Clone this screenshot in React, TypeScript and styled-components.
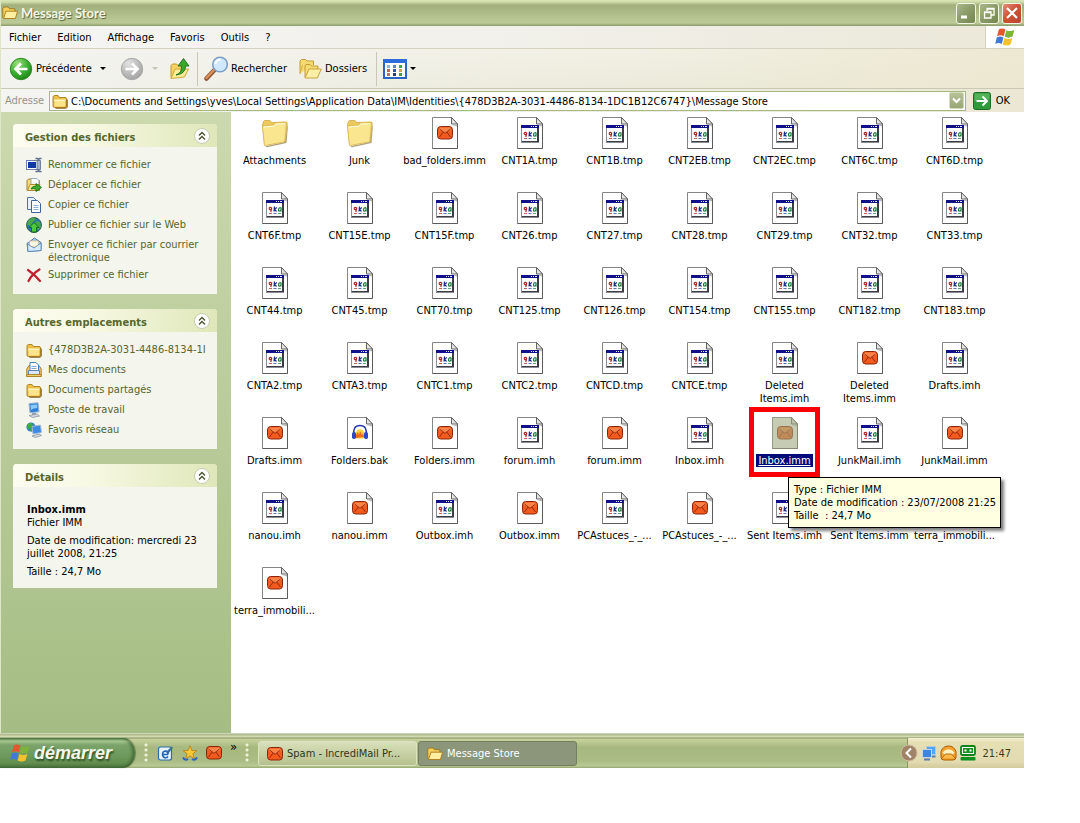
import React from "react";
import styled, { createGlobalStyle, css } from "styled-components";

const Global = createGlobalStyle`
  *, *::before, *::after { box-sizing: border-box; }
  body { margin: 0; background: #fff; }
  body, button, input {
    font-family: "DejaVu Sans Condensed", "Noto Sans", sans-serif;
    font-size: 11px;
    line-height: 13px;
  }
  button { margin: 0; padding: 0; border: 0; background: none; color: inherit; }
  ul, p, h1, h2 { margin: 0; padding: 0; font-size: 11px; }
  ul { list-style: none; }
  svg { display: block; flex: none; }
`;

const Page = styled.div`
  min-height: 100vh;
  padding: 0 56px 55px 0;
  display: flex;
`;
const Desktop = styled.div`
  flex: 1;
  min-width: 0;
  display: flex;
  flex-direction: column;
`;
const Explorer = styled.section`
  flex: 1;
  display: flex;
  flex-direction: column;
  border-left: 1px solid #dfe6c8;
`;

/* title bar */
const TitleBar = styled.header`
  height: 26px;
  display: flex;
  align-items: center;
  gap: 3px;
  padding: 0 2px 0 1px;
  background: linear-gradient(#d9e8b4 0, #cfdcaa 2px, #a3b07c 5px, #a6b582 9px, #b5c490 18px, #bcca98 23px, #8a9a68 26px);
`;
const Title = styled.h1`
  flex: 1;
  font-family: Lato, sans-serif;
  font-size: 13px;
  line-height: 16px;
  font-weight: 700;
  color: #f4f5e4;
  text-shadow: 1px 1px 1px #56633c;
`;
const CaptionButton = styled.button<{ $close?: boolean }>`
  width: 20px;
  height: 21px;
  display: grid;
  place-items: center;
  border: 1px solid #f3f6e4;
  border-radius: 3px;
  background: ${(p) =>
    p.$close
      ? "linear-gradient(135deg, #e0917a, #cf5238 45%, #b8452c)"
      : "linear-gradient(135deg, #a9b88a, #8a9b68 50%, #74874f)"};
`;

/* menu bar */
const MenuBar = styled.nav`
  height: 23px;
  display: flex;
  align-items: stretch;
  border-bottom: 1px solid #d5d2c0;
  background: linear-gradient(90deg, #f5f5f3, #f1f0ea 50%, #ebe8d8);
`;
const MenuList = styled.ul`
  flex: 1;
  display: flex;
  align-items: center;
  gap: 16px;
  padding-left: 8px;
`;
const Throbber = styled.div`
  width: 39px;
  display: grid;
  place-items: center;
  border-left: 1px solid #d5d2c0;
  background: #fff;
`;

/* tool bar */
const ToolBar = styled.div`
  height: 40px;
  display: flex;
  align-items: center;
  border-bottom: 1px solid #c9c8b4;
  background: linear-gradient(90deg, rgba(243, 243, 240, 0.9), rgba(238, 236, 220, 0.5) 60%, rgba(236, 231, 207, 0.9)),
    linear-gradient(#f6f5ee, #e9e8da);
`;
const ToolButton = styled.button<{ $width: number; $lead?: boolean }>`
  width: ${(p) => p.$width}px;
  display: flex;
  align-items: center;
  gap: 3px;
  padding-left: ${(p) => (p.$lead ? 8 : 0)}px;
  white-space: nowrap;
`;
const Caret = styled.span<{ $off?: boolean; $apart?: boolean }>`
  width: 0;
  height: 0;
  margin-left: ${(p) => (p.$apart ? 5 : 0)}px;
  border: 3px solid transparent;
  border-top-color: ${(p) => (p.$off ? "#c5c4b8" : "#000")};
  border-bottom-width: 0;
`;
const ToolSeparator = styled.span`
  width: 1px;
  height: 34px;
  margin-right: 6px;
  background: #c9c7b6;
`;

/* address bar */
const AddressBar = styled.div`
  height: 23px;
  display: flex;
  align-items: center;
  padding: 0 14px 0 4px;
  background: linear-gradient(90deg, #f4f4f1, #f0eee4 60%, #ebe7d3);
`;
const AddressLabel = styled.label`
  width: 44px;
  color: #95948a;
`;
const AddressBox = styled.div`
  flex: 1;
  height: 20px;
  display: flex;
  align-items: center;
  gap: 2px;
  padding: 0 1px 0 2px;
  border: 1px solid #a4b97f;
  background: #fff;
`;
const AddressInput = styled.input`
  flex: 1;
  min-width: 0;
  padding: 2px 0 0 1px;
  border: 0;
  outline: 0;
  background: none;
  color: #000;
`;
const DropButton = styled.button`
  width: 15px;
  height: 17px;
  display: grid;
  place-items: center;
  border: 1px solid #d5dcbb;
  border-radius: 2px;
  background: linear-gradient(#b8c298, #98a776);
`;
const GoButton = styled.button`
  display: flex;
  align-items: center;
  gap: 5px;
  padding-left: 7px;
`;

/* window body */
const Body = styled.div`
  flex: 1;
  display: flex;
`;
const Sidebar = styled.aside`
  width: 230px;
  flex: none;
  display: flex;
  flex-direction: column;
  gap: 15px;
  padding: 12px 14px 12px 12px;
  background: linear-gradient(#ccd9ae, #a5bd84);
`;
const Panel = styled.section`
  border-radius: 4px 4px 0 0;
  overflow: hidden;
  background: #f4f5ec;
`;
const PanelHead = styled.div`
  height: 23px;
  display: flex;
  align-items: center;
  justify-content: space-between;
  padding: 0 6px 0 12px;
  background: linear-gradient(90deg, #fcfcf0, #f8f9e4 35%, #dfe7b9);
`;
const PanelTitle = styled.h2`
  padding-top: 4px;
  color: #56662d;
  font-weight: 700;
`;
const TaskList = styled.ul`
  display: flex;
  flex-direction: column;
  gap: 3px;
  padding: 10px 10px 10px 13px;
`;
const TaskItem = styled.li`
  min-height: 17px;
  display: flex;
  align-items: flex-start;
  gap: 6px;
`;
const TaskLink = styled.a`
  flex: 1;
  min-width: 0;
  padding-top: 1px;
  color: #56662d;
  text-decoration: none;
`;
const Details = styled.div`
  display: flex;
  flex-direction: column;
  gap: 5px;
  padding: 16px 20px 10px 14px;
`;

const FileGrid = styled.ul`
  flex: 1;
  display: grid;
  grid-template-columns: repeat(auto-fill, 85px);
  grid-auto-rows: 75px;
  align-content: start;
  padding: 5px 0 0 1px;
  background: #fff;
`;
const FileCell = styled.li<{ $top?: boolean }>`
  position: relative;
  z-index: ${(p) => (p.$top ? 1 : 0)};
  display: flex;
  justify-content: center;
  align-items: flex-start;
`;
const FileButton = styled.button`
  width: 85px;
  display: flex;
  flex-direction: column;
  align-items: center;
  gap: 5px;
`;
const FileName = styled.span<{ $selected?: boolean }>`
  ${(p) =>
    p.$selected &&
    css`
      padding: 0 2px;
      background: #000a78;
      color: #fff;
      text-decoration: underline;
    `}
`;
const Marker = styled.span`
  position: absolute;
  left: 7px;
  top: -10px;
  width: 71px;
  height: 70px;
  border: 5px solid #fb0007;
  pointer-events: none;
`;
const Tooltip = styled.div`
  position: absolute;
  left: 46px;
  top: 60px;
  padding: 5px 4px 5px 5px;
  border: 1px solid #000;
  background: #ffffe1;
  box-shadow: 3px 3px 3px rgba(0, 0, 0, 0.5);
  white-space: pre;
`;

/* task bar */
const TaskBar = styled.footer`
  height: 35px;
  flex: none;
  display: flex;
  align-items: stretch;
  padding-top: 5px;
  background: linear-gradient(#f3f3e4 0, #a9b68a 1px, #c9d2a6 3px, #dbe2bd 4px, #7f8f5a 5px, #c9d3a0 6px, #bcc994 9px, #a8b97f 14px, #abbc84 28px, #b9c996 33px, #94a56c 35px);
`;
const StartButton = styled.button`
  width: 135px;
  display: flex;
  align-items: center;
  gap: 4px;
  padding: 0 0 0 10px;
  border-radius: 0 12px 12px 0 / 0 15px 15px 0;
  background: linear-gradient(#4e7742 0, #a5c88f 3px, #7ba36a 7px, #6c9a5b 18px, #628f50 25px, #45703a 30px);
  box-shadow: inset -3px 0 3px rgba(40, 70, 30, 0.5), 1px 0 1px rgba(80, 100, 50, 0.6);
`;
const StartText = styled.span`
  font-family: "Liberation Sans", sans-serif;
  font-size: 18px;
  line-height: 22px;
  font-weight: 700;
  font-style: italic;
  color: #f6f8ee;
  text-shadow: 1px 2px 2px #2c4a22;
`;
const QuickLaunch = styled.div`
  width: 111px;
  display: flex;
  align-items: center;
  gap: 8px;
  margin-left: 9px;
`;
const Grip = styled.span`
  width: 5px;
  height: 20px;
  background: radial-gradient(circle at 2px 2px, #eef2d8 1px, transparent 2px) 0 0 / 5px 5px;
`;
const More = styled.button`
  align-self: flex-start;
  padding-top: 2px;
  font-size: 13px;
`;
const TaskButtons = styled.div`
  flex: 1;
  display: flex;
  align-items: stretch;
  gap: 1px;
  padding: 3px 0 2px 0;
`;
const TaskButton = styled.button<{ $active?: boolean }>`
  width: 159px;
  display: flex;
  align-items: center;
  gap: 4px;
  padding-left: 8px;
  border: 1px solid ${(p) => (p.$active ? "#74805f" : "#dde3c0")};
  border-radius: 3px;
  background: ${(p) => (p.$active ? "#8b967b" : "linear-gradient(#d8dfba, #c4cda0 60%, #b5c08e)")};
  color: ${(p) => (p.$active ? "#fff" : "#2e3620")};
`;
const Tray = styled.div`
  display: flex;
  align-items: center;
  gap: 3px;
  padding: 0 13px 0 0;
  border-left: 1px solid #8a9660;
  background: linear-gradient(#f4efd0 0, #e6dfb4 4px, #e2dab0 24px, #d2cb9c 30px);
  color: #3d3d20;
`;
const TrayToggle = styled.button`
  margin-left: -8px;
`;
const Clock = styled.time`
  padding-left: 3px;
`;

/* icons */
type Size = { s?: number };

const SmallFolder = ({ s = 16 }: Size) => (
  <svg width={s} height={s} viewBox="0 0 16 16">
    <path d="M1 4.500Q1 2.500 2.500 2.500h3.500L7.500 4.500H13Q14.500 4.500 14.500 6v7q0 1.500-1.500 1.500H2.500Q1 14.500 1 13z" fill="#eebf45" stroke="#a87a1a" strokeWidth=".9" />
    <path d="M2.500 7h10.500v6.500H2.500z" fill="#fbe48a" />
    <path d="M2 6.500h11.500v1.500H2z" fill="#fff6c4" />
    <path d="M15.300 6.500v7.500q-.3 1.200-1.500 1.300H3.500" fill="none" stroke="#7a5a18" strokeWidth=".9" />
  </svg>
);
const OpenFolder = ({ s = 16 }: Size) => (
  <svg width={s} height={s} viewBox="0 0 16 16">
    <path d="M.8 13V3.500L2 2h4l1.500 1.700h5.300V6" fill="#f4cf5a" stroke="#9a6c12" strokeWidth=".8" />
    <path d="M1.500 13.500 4 6.200h11.600l-2.200 7.300z" fill="#fdeea0" stroke="#a87a1c" strokeWidth=".9" />
  </svg>
);
const Mail = ({ s = 16 }: Size) => (
  <svg width={s} height={s} viewBox="0 0 16 16">
    <path d="M3.500 1.500h9Q15.500 1.500 15.500 5v5.500q0 3.500-3 3.500h-9q-3 0-3-3.500V5q0-3.500 3-3.500z" fill="#f25a1e" stroke="#8c2408" />
    <path d="M3.200 2.600h9.600q1.600.4 1.600 2.200L8 8.300 1.600 4.800Q1.600 3 3.200 2.600z" fill="#fb8348" />
    <path d="M2.500 4 8 8.300 13.500 4M2.500 12l3.700-5M13.500 12 9.800 7" fill="none" stroke="#8c2408" strokeWidth=".9" />
  </svg>
);
const WindowsFlag = ({ s = 20 }: Size) => (
  <svg width={s} height={s} viewBox="0 0 20 20">
    <path d="M3.800 2.500q3.200-2.200 6.600 0L8.700 9.300q-3.300-2-6.700 0z" fill="#e4572a" />
    <path d="M11.400 3.200q3.400 1.900 7.900-.2l-1.800 6.600q-4.200 2.200-7.800 0z" fill="#7db53c" />
    <path d="M1.700 10.400q3.300-2 6.700 0L6.800 17q-3.300-2-6.600 0z" fill="#4379d6" />
    <path d="M9.400 10.900q3.800 2.100 7.900 0l-1.800 6.500q-4 2.200-7.800 0z" fill="#f3c22c" />
  </svg>
);
const PageShape = () => (
  <>
    <path d="M3.500.500h19L28.500 7v24.500h-25z" fill="#fff" stroke="#858585" />
    <path d="M28.500 7v24.500h-25" fill="none" stroke="#5c5c5c" />
    <path d="M22.500.500V7h6z" fill="#e4e4e4" stroke="#555" strokeWidth=".9" />
    <path d="M23 8h5v1.500z" fill="#b8b8b8" />
  </>
);
const BigFolder = () => (
  <svg width="32" height="32" viewBox="0 0 32 32">
    <path d="M6 29.300 26 25l2.500-17 .5 1-1.500 17L8 30.300z" fill="#8c7c48" opacity=".7" />
    <path d="M3.500 8 4.500 4.500Q5 3.500 6 3.500h4.500q1 0 1.500 1l.5 1L27 5q1.300 0 1.200 1.200L26 24.500 5.500 28z" fill="#eccb5c" stroke="#cda640" strokeWidth=".8" />
    <path d="M3.600 10q-.1-1.200 1-1.300L14.500 8l2-2.200 11-.3-1.700 18.200q-.1 1-1 1.200L6.500 28.500q-1 .2-1.100-.8z" fill="#fae68e" stroke="#dcb850" strokeWidth=".8" />
    <path d="M5 11.500V10l10-.7 2-2.200 9-.3" fill="none" stroke="#fffbdc" />
  </svg>
);
const ImmIcon = () => (
  <svg width="32" height="32" viewBox="0 0 32 32">
    <PageShape />
    <svg x="8" y="8" width="16" height="16"><Mail /></svg>
  </svg>
);
const TmpIcon = () => (
  <svg width="32" height="32" viewBox="0 0 32 32">
    <PageShape />
    <g shapeRendering="crispEdges">
      <path d="M7 8h18v18H7z" fill="#8c8c94" />
      <path d="M8 11h15v13H8z" fill="#fff" />
      <path d="M7 8h18v3H7z" fill="#10108c" />
      <path d="M17 9h1v1h-1zM19 9h1v1h-1zM21 9h2v1h-2z" fill="#dfe4ff" />
      <path d="M23 11h2v14H8v-1h15z" fill="#3c3c44" />
    </g>
    <path d="M12.500 15.500q-2.300-.5-2.300 1t2 1l.6-2-1 4.500" fill="none" stroke="#a82820" strokeWidth="1.200" />
    <path d="M15.500 14.500 15 19.500M17.800 15.500 15.500 17.300l2 2.200" fill="none" stroke="#1c2c90" strokeWidth="1.200" />
    <path d="M21.800 15.500q-2.300 0-2.300 2.500 0 1.500 1.500 1t1-3.500v4" fill="none" stroke="#18803c" strokeWidth="1.200" />
    <path d="M10 21.500h3" stroke="#c86058" />
    <path d="M14.500 21.500h3" stroke="#6070b8" />
    <path d="M19 21.500h3" stroke="#58a878" />
  </svg>
);
const BakIcon = () => (
  <svg width="32" height="32" viewBox="0 0 32 32">
    <PageShape />
    <path d="M12 21.500q-2-8.500 4-9.500 6 1 4 9.500z" fill="#fbd33c" />
    <path d="M12 18l2-3 1 3 1-4 2 4 1-2 1 4-8 1z" fill="#ee6a1c" />
    <path d="M10 18Q8.500 8.500 16 8.500T22 18" fill="none" stroke="#2438a8" strokeWidth="1.500" />
    <rect x="8" y="15" width="4" height="7" rx="1.800" fill="#2c48c4" />
    <rect x="20" y="15" width="4" height="7" rx="1.800" fill="#2c48c4" />
  </svg>
);
const SelectedIcon = () => (
  <svg width="32" height="32" viewBox="0 0 32 32">
    <PageShape />
    <svg x="8" y="8" width="16" height="16"><Mail /></svg>
    <path d="M3 0h20l6 7v25H3z" fill="#a0aa80" opacity=".6" />
  </svg>
);
const Chevrons = () => (
  <svg width="18" height="18" viewBox="0 0 18 18">
    <circle cx="9" cy="9" r="7.500" fill="#fff" stroke="#c6cbb0" />
    <path d="M6 8.500 9 5.500l3 3M6 12.500l3-3 3 3" fill="none" stroke="#45502a" strokeWidth="1.300" />
  </svg>
);
const RoundArrow = ({ off }: { off?: boolean }) => (
  <svg width="24" height="24" viewBox="0 0 24 24">
    <defs>
      <radialGradient id={off ? "fwd" : "back"} cx=".35" cy=".25" r=".9">
        <stop offset="0" stopColor={off ? "#e2e2e2" : "#a0e080"} />
        <stop offset=".5" stopColor={off ? "#bcbcbc" : "#3cb034"} />
        <stop offset="1" stopColor={off ? "#9a9a9a" : "#14780c"} />
      </radialGradient>
    </defs>
    <circle cx="12" cy="12" r="10.700" fill={off ? "url(#fwd)" : "url(#back)"} stroke={off ? "#a8a8a8" : "#2c8a20"} />
    <path
      d={off ? "M5.500 12H17M12 6.500l5.500 5.500-5.500 5.500" : "M18.500 12H7M12 6.500 6.500 12l5.500 5.500"}
      fill="none" stroke="#fff" strokeWidth="2.600"
    />
  </svg>
);
const UpFolder = () => (
  <svg width="22" height="24" viewBox="0 0 22 24">
    <path d="M2 20.500V8.500L3.500 7h4L9 8.500h6V12" fill="#f4d364" stroke="#c4982c" />
    <path d="M2 21.500 6 12h13.500L15.500 20z" fill="#fdec98" stroke="#d0a638" />
    <path d="M7 18q6-2 5.500-9H9l5.500-7.500L20 9h-3.500Q16.500 17 7 18z" fill="#3aa82c" stroke="#1c6c14" strokeWidth=".9" />
  </svg>
);
const SearchIcon = () => (
  <svg width="24" height="25" viewBox="0 0 24 25">
    <path d="M2.500 22.500 10 14.500" stroke="#8c5030" strokeWidth="4.500" strokeLinecap="round" />
    <path d="M2.500 22 10 14" stroke="#d8905c" strokeWidth="2.500" strokeLinecap="round" />
    <circle cx="16" cy="8.500" r="7.300" fill="#cfe8fb" stroke="#7c9cc8" strokeWidth="1.500" />
    <path d="M11.500 8q.500-4 5-4.500" fill="none" stroke="#fff" strokeWidth="2" />
  </svg>
);
const FoldersIcon = () => (
  <svg width="23" height="22" viewBox="0 0 23 22">
    <path d="M1 15.500V3l1.500-1.500h4L8 3h6.500V7" fill="#f5da72" stroke="#c59c34" />
    <path d="M6 19.500V8L7 6.500h4L12.500 8H19v3" fill="#f5da72" stroke="#c59c34" />
    <path d="m6 20 4-9h12.300l-4 9z" fill="#fdf0a6" stroke="#cba23c" />
    <path d="m1 16 2.500-9" stroke="#d8b248" />
  </svg>
);
const ViewsIcon = () => (
  <svg width="24" height="20" viewBox="0 0 24 20" shapeRendering="crispEdges">
    <rect x="1" y="1" width="22" height="18" fill="#fff" stroke="#2c62c4" strokeWidth="2" />
    <rect x="0" y="0" width="24" height="4" fill="#2c6cdc" />
    <rect x="4" y="6" width="3" height="3" fill="#9ab0d0" />
    <rect x="10" y="6" width="3" height="3" fill="#5c84c8" />
    <rect x="16" y="6" width="3" height="3" fill="#48a048" />
    <rect x="4" y="10" width="3" height="3" fill="#c86040" />
    <rect x="10" y="10" width="3" height="3" fill="#2858a8" />
    <rect x="16" y="10" width="3" height="3" fill="#c8a840" />
    <rect x="4" y="14" width="3" height="3" fill="#b87070" />
    <rect x="10" y="14" width="3" height="3" fill="#303870" />
    <rect x="16" y="14" width="3" height="3" fill="#489848" />
  </svg>
);
const GoIcon = () => (
  <svg width="18" height="18" viewBox="0 0 18 18">
    <rect x=".5" y=".5" width="17" height="17" rx="2" fill="#2f9a3c" stroke="#1c6c28" />
    <path d="M1.500 1.500h15v6q-8-2-15 2z" fill="#62bc62" opacity=".7" />
    <path d="M3.500 9H14M9.500 4.500 14 9l-4.500 4.500" fill="none" stroke="#fff" strokeWidth="2" />
  </svg>
);
const RenameIcon = () => (
  <svg width="16" height="16" viewBox="0 0 16 16">
    <rect x=".5" y="3.500" width="11" height="9" fill="#fff" stroke="#7080a8" />
    <rect x="2" y="5" width="8" height="6" fill="#1238a8" />
    <path d="M9.500 1.500h2l1 1 1-1h2M12.500 2.500v11M9.500 14.500h2l1-1 1 1h2" fill="none" stroke="#5c6c90" strokeWidth="1.600" />
    <path d="M11 3.500h3.500v9H11z" fill="#a8b4cc" stroke="#5c6c90" strokeWidth=".8" />
  </svg>
);
const MoveIcon = () => (
  <svg width="16" height="16" viewBox="0 0 16 16">
    <path d="M1 13.500v-10L2.500 2h4L8 3.500h5.500v10z" fill="#f5d878" stroke="#a08030" />
    <path d="M5 1.500h6l2 2V9H5z" fill="#fff" stroke="#98a8c0" />
    <path d="M1.500 13.500 4 7.500h10l-2 6z" fill="#fbea9c" stroke="#b08c30" />
    <path d="M5 12q1-3 5-3V6.500l5.500 4-5.500 4V12q-3-.5-5 0z" fill="#3cae2c" stroke="#146c10" strokeWidth=".8" />
  </svg>
);
const CopyIcon = () => (
  <svg width="16" height="16" viewBox="0 0 16 16">
    <path d="M1.500.5h6l3 3v9h-9z" fill="#e8f2fc" stroke="#4c74a8" />
    <path d="M5.500 3.500h6l3 3v9h-9z" fill="#fff" stroke="#3c649c" />
    <path d="M7.500 8.500h5M7.500 10.500h5M7.500 12.500h5" stroke="#8cb0dc" />
  </svg>
);
const WebIcon = () => (
  <svg width="16" height="16" viewBox="0 0 16 16">
    <circle cx="8" cy="8" r="7.500" fill="#2c74b8" stroke="#1c5038" strokeWidth=".8" />
    <path d="M2 4q3-4 7-3 1 2-2 4L5 9 1 8zM10 4l4 1 1 5-3 3-3-5z" fill="#46a848" />
    <path d="m8 5.500 5 5h-2.500V15h-5v-4.500H3z" fill="#4cc83c" stroke="#0c5c14" strokeWidth=".8" />
  </svg>
);
const SendIcon = () => (
  <svg width="16" height="16" viewBox="0 0 16 16">
    <path d="M1 6.500 8.500 1 15 5.500v8L2 14.500z" fill="#a8ccf0" stroke="#4c78a8" />
    <path d="M3.500 4h9v6h-9z" fill="#fff8e0" stroke="#c8b080" strokeWidth=".7" />
    <path d="M1.500 7 8 11l7-5v7.500L2 14.500z" fill="#d8eafc" stroke="#5480b0" strokeWidth=".8" />
  </svg>
);
const DeleteIcon = () => (
  <svg width="16" height="16" viewBox="0 0 16 16">
    <path d="M2 3q6 4 12 11M13.500 2.500Q6 7 2.500 14" fill="none" stroke="#c0202c" strokeWidth="2.200" strokeLinecap="round" />
  </svg>
);
const DocsIcon = () => (
  <svg width="16" height="16" viewBox="0 0 16 16">
    <path d="M.8 7 3 3.500h10L15.200 7v7.500H.8z" fill="#f4cf64" stroke="#a47c20" />
    <path d="M4 .5h6L12.500 3v8H4z" fill="#fff" stroke="#4c80c0" />
    <path d="M5.500 4.500h5M5.500 6.500h5" stroke="#7ca8dc" />
    <path d="M2.500 8.500h11v4h-11z" fill="#d8e8f8" stroke="#5a86bc" />
    <path d="M.8 12.500h14.400v2H.8z" fill="#f4cf64" stroke="#a47c20" strokeWidth=".8" />
  </svg>
);
const Computer = () => (
  <svg width="16" height="16" viewBox="0 0 16 16">
    <path d="M3 1.500 12 .8l1 9-9 1z" fill="#2f80dc" stroke="#9cb4d0" />
    <path d="M4.500 3 11 2.400l.3 3.600Q7 6 5 8z" fill="#8cccfa" />
    <path d="M6 11h4v2H6z" fill="#98a4b4" />
    <path d="m3 13.500 8-1.500 2.500 2-7 1.500z" fill="#d4d8dc" stroke="#808c98" strokeWidth=".7" />
  </svg>
);
const NetworkPlaces = () => (
  <svg width="16" height="16" viewBox="0 0 16 16">
    <circle cx="5" cy="5" r="4.600" fill="#2c80c0" />
    <path d="M2 2q3-2 5 0L5 6 1 7zM3 8l3-2 2 2-2 2z" fill="#3cac3c" />
    <path d="m6 4.500 8.500-1.500 1 7.500L7 12z" fill="#3c8ae4" stroke="#a8bcd4" />
    <path d="m6 14 7-2 2.500 1.500-6 2z" fill="#d4d8dc" stroke="#808c98" strokeWidth=".7" />
  </svg>
);
const BrowserIcon = () => (
  <svg width="17" height="17" viewBox="0 0 17 17">
    <rect x="1.500" y="2" width="13" height="13" rx="2" fill="#e8f4fc" stroke="#2c6ca8" strokeWidth="1.200" />
    <path d="M11 9.500H5.500M11 11.500q-1 1.500-3 1.200Q5.500 12 5.500 9.200T8.500 6q2.500.2 2.600 3.500" fill="none" stroke="#1c64b4" strokeWidth="1.500" />
    <path d="m9 7 5.500-5.500 1.500 1L11 9z" fill="#3c6c9c" />
  </svg>
);
const StarIcon = () => (
  <svg width="16" height="16" viewBox="0 0 16 16">
    <path d="m8 .8 1.800 4.700 5 .2-3.900 3.100 1.400 4.900L8 11l-4.300 2.700 1.400-4.900L1.200 5.700l5-.2z" fill="#fcc838" stroke="#b87c14" strokeWidth=".8" />
    <path d="M1 12.500q2 3.500 5 1.500M10 14q3 2 5-1.500" fill="none" stroke="#2c64b8" strokeWidth="2" />
  </svg>
);
const TrayArrow = () => (
  <svg width="18" height="18" viewBox="0 0 18 18">
    <circle cx="9" cy="9" r="8" fill="#a18468" stroke="#d0bc9c" />
    <path d="M11 4.500 6.500 9l4.500 4.500" fill="none" stroke="#fff" strokeWidth="2" />
  </svg>
);
const TrayNetwork = () => (
  <svg width="16" height="16" viewBox="0 0 16 16">
    <rect x="5.500" y="1.500" width="9" height="8" fill="#58a4f0" stroke="#b4c8dc" />
    <rect x="1.500" y="4.500" width="9" height="8" fill="#3c84e0" stroke="#c4d4e4" />
    <path d="M3 14.500h6M11 11.500h3.500" stroke="#5c7ca8" strokeWidth="1.800" />
  </svg>
);
const TrayMail = () => (
  <svg width="17" height="16" viewBox="0 0 17 16">
    <path d="M1 6.500Q3 1 8.500 1T16 6.500V12q0 3-3 3H4q-3 0-3-3z" fill="#f5a32c" stroke="#a85c08" />
    <path d="M2.500 7.500Q8.500 1 14.500 7.500L12 10H5z" fill="#fff2c4" />
    <path d="m2 13 3.500-4h6l3.500 4" fill="#fbbc4c" stroke="#b86c10" />
  </svg>
);
const TrayModem = () => (
  <svg width="16" height="16" viewBox="0 0 16 16">
    <rect x="1" y="1" width="14" height="9" rx="1.500" fill="#fff" stroke="#0c8418" strokeWidth="1.800" />
    <rect x="3" y="3" width="10" height="5" fill="#149020" />
    <path d="M4.500 5.500h2M9.500 5.500h2" stroke="#fff" strokeWidth="2" />
    <rect x=".5" y="12" width="15" height="3.500" rx="1" fill="#109020" />
  </svg>
);

/* data */
const tasks: [React.ReactNode, string][] = [
  [<RenameIcon />, "Renommer ce fichier"],
  [<MoveIcon />, "Déplacer ce fichier"],
  [<CopyIcon />, "Copier ce fichier"],
  [<WebIcon />, "Publier ce fichier sur le Web"],
  [<SendIcon />, "Envoyer ce fichier par courrier électronique"],
  [<DeleteIcon />, "Supprimer ce fichier"],
];
const places: [React.ReactNode, string][] = [
  [<SmallFolder />, "{478D3B2A-3031-4486-8134-1I"],
  [<DocsIcon />, "Mes documents"],
  [<SmallFolder />, "Documents partagés"],
  [<Computer />, "Poste de travail"],
  [<NetworkPlaces />, "Favoris réseau"],
];
const files: [string, string?][] = [
  ["Attachments", "dir"], ["Junk", "dir"], ["bad_folders.imm", "imm"],
  ["CNT1A.tmp"], ["CNT1B.tmp"], ["CNT2EB.tmp"], ["CNT2EC.tmp"], ["CNT6C.tmp"], ["CNT6D.tmp"],
  ["CNT6F.tmp"], ["CNT15E.tmp"], ["CNT15F.tmp"], ["CNT26.tmp"], ["CNT27.tmp"], ["CNT28.tmp"],
  ["CNT29.tmp"], ["CNT32.tmp"], ["CNT33.tmp"],
  ["CNT44.tmp"], ["CNT45.tmp"], ["CNT70.tmp"], ["CNT125.tmp"], ["CNT126.tmp"], ["CNT154.tmp"],
  ["CNT155.tmp"], ["CNT182.tmp"], ["CNT183.tmp"],
  ["CNTA2.tmp"], ["CNTA3.tmp"], ["CNTC1.tmp"], ["CNTC2.tmp"], ["CNTCD.tmp"], ["CNTCE.tmp"],
  ["Deleted Items.imh"], ["Deleted Items.imm", "imm"], ["Drafts.imh"],
  ["Drafts.imm", "imm"], ["Folders.bak", "bak"], ["Folders.imm", "imm"], ["forum.imh"], ["forum.imm", "imm"],
  ["Inbox.imh"], ["Inbox.imm", "selected"], ["JunkMail.imh"], ["JunkMail.imm", "imm"],
  ["nanou.imh"], ["nanou.imm", "imm"], ["Outbox.imh"], ["Outbox.imm", "imm"], ["PCAstuces_-_..."],
  ["PCAstuces_-_...", "imm"], ["Sent Items.imh"], ["Sent Items.imm", "imm"], ["terra_immobili..."],
  ["terra_immobili...", "imm"],
];
const fileIcons: Record<string, React.ReactNode> = {
  dir: <BigFolder />,
  imm: <ImmIcon />,
  bak: <BakIcon />,
  tmp: <TmpIcon />,
  selected: <SelectedIcon />,
};

function SidePanel({ title, children }: { title: string; children: React.ReactNode }) {
  return (
    <Panel>
      <PanelHead>
        <PanelTitle>{title}</PanelTitle>
        <button aria-label={`Réduire ${title}`}><Chevrons /></button>
      </PanelHead>
      {children}
    </Panel>
  );
}

function Links({ items }: { items: [React.ReactNode, string][] }) {
  return (
    <TaskList>
      {items.map(([icon, text]) => (
        <TaskItem key={text}>
          {icon}
          <TaskLink href="#">{text}</TaskLink>
        </TaskItem>
      ))}
    </TaskList>
  );
}

export default function App() {
  return (
    <Page>
      <Global />
      <Desktop>
        <Explorer>
          <TitleBar>
            <OpenFolder />
            <Title>Message Store</Title>
            <CaptionButton aria-label="Réduire">
              <svg width="14" height="14" viewBox="0 0 14 14"><path d="M2 11h6" stroke="#fff" strokeWidth="3" /></svg>
            </CaptionButton>
            <CaptionButton aria-label="Restaurer">
              <svg width="14" height="14" viewBox="0 0 14 14">
                <path d="M5 5V2.500h7V9H9.500M5 3h7M2.500 6h6.500v6H2.500zM2.500 6.500H9" fill="none" stroke="#fff" strokeWidth="1.300" />
              </svg>
            </CaptionButton>
            <CaptionButton $close aria-label="Fermer">
              <svg width="14" height="14" viewBox="0 0 14 14"><path d="m2 2 10 10M12 2 2 12" stroke="#fff" strokeWidth="2.200" /></svg>
            </CaptionButton>
          </TitleBar>
          <MenuBar>
            <MenuList>
              {["Fichier", "Edition", "Affichage", "Favoris", "Outils", "?"].map((m) => (
                <li key={m}><button>{m}</button></li>
              ))}
            </MenuList>
            <Throbber><WindowsFlag /></Throbber>
          </MenuBar>
          <ToolBar>
            <ToolButton $width={119} $lead>
              <RoundArrow />
              Précédente <Caret $apart />
            </ToolButton>
            <ToolButton $width={49}><RoundArrow off /><Caret $off $apart /></ToolButton>
            <ToolButton $width={28} aria-label="Dossier parent"><UpFolder /></ToolButton>
            <ToolSeparator />
            <ToolButton $width={95}><SearchIcon />Rechercher</ToolButton>
            <ToolButton $width={77}><FoldersIcon />Dossiers</ToolButton>
            <ToolSeparator />
            <ToolButton $width={34} aria-label="Affichage"><ViewsIcon /><Caret /></ToolButton>
          </ToolBar>
          <AddressBar>
            <AddressLabel htmlFor="address">Adresse</AddressLabel>
            <AddressBox>
              <SmallFolder />
              <AddressInput
                id="address"
                defaultValue="C:\Documents and Settings\yves\Local Settings\Application Data\IM\Identities\{478D3B2A-3031-4486-8134-1DC1B12C6747}\Message Store"
              />
              <DropButton aria-label="Historique">
                <svg width="9" height="7" viewBox="0 0 9 7"><path d="m1 1.500 3.500 3.500L8 1.500" fill="none" stroke="#fff" strokeWidth="2" /></svg>
              </DropButton>
            </AddressBox>
            <GoButton><GoIcon />OK</GoButton>
          </AddressBar>
          <Body>
            <Sidebar>
              <SidePanel title="Gestion des fichiers"><Links items={tasks} /></SidePanel>
              <SidePanel title="Autres emplacements"><Links items={places} /></SidePanel>
              <SidePanel title="Détails">
                <Details>
                  <p><strong>Inbox.imm</strong><br />Fichier IMM</p>
                  <p>Date de modification: mercredi 23 juillet 2008, 21:25</p>
                  <p>Taille : 24,7 Mo</p>
                </Details>
              </SidePanel>
            </Sidebar>
            <FileGrid>
              {files.map(([name, kind = "tmp"], i) => {
                const selected = kind === "selected";
                return (
                  <FileCell key={i} $top={selected}>
                    <FileButton>
                      {fileIcons[kind]}
                      <FileName $selected={selected}>{name}</FileName>
                    </FileButton>
                    {selected && (
                      <>
                        <Marker />
                        <Tooltip role="tooltip">
                          {"Type : Fichier IMM\nDate de modification : 23/07/2008 21:25\nTaille  : 24,7 Mo"}
                        </Tooltip>
                      </>
                    )}
                  </FileCell>
                );
              })}
            </FileGrid>
          </Body>
        </Explorer>
        <TaskBar>
          <StartButton><WindowsFlag /><StartText>démarrer</StartText></StartButton>
          <QuickLaunch>
            <Grip />
            <button aria-label="Internet"><BrowserIcon /></button>
            <button aria-label="Favoris"><StarIcon /></button>
            <button aria-label="Courrier"><Mail /></button>
            <More>»</More>
            <Grip />
          </QuickLaunch>
          <TaskButtons>
            <span style={{ width: 2 }} />
            <TaskButton><Mail />Spam - IncrediMail Pr...</TaskButton>
            <TaskButton $active><OpenFolder />Message Store</TaskButton>
          </TaskButtons>
          <Tray>
            <TrayToggle aria-label="Afficher les icônes"><TrayArrow /></TrayToggle>
            <TrayNetwork />
            <TrayMail />
            <TrayModem />
            <Clock>21:47</Clock>
          </Tray>
        </TaskBar>
      </Desktop>
    </Page>
  );
}
